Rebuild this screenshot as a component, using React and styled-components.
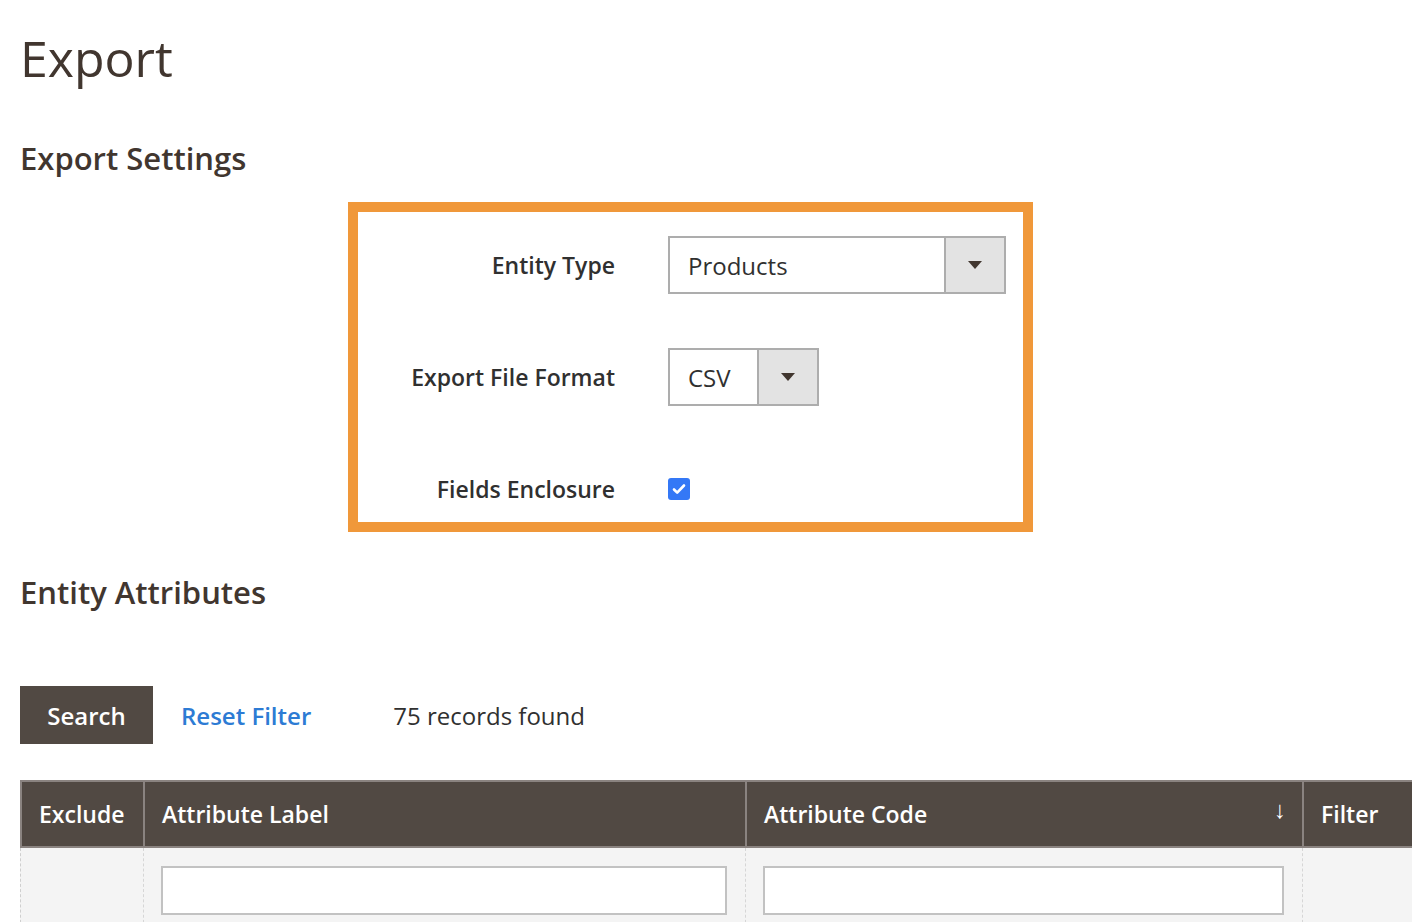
import React from 'react';
import styled, { createGlobalStyle } from 'styled-components';

const Global = createGlobalStyle`
  body { margin: 0; background: #fff; font-family: "Open Sans", "Liberation Sans", sans-serif; color: #303030; }
`;

const Page = styled.div`
  padding: 22px 0 0 20px;
  overflow: hidden;
  height: 922px;
  box-sizing: border-box;
`;

const Title = styled.h1`
  margin: 0;
  font-size: 50px;
  font-weight: 400;
  color: #41362f;
  line-height: 72px;
`;

const Section = styled.h2`
  margin: ${p => p.$mt} 0 0;
  font-size: 31px;
  font-weight: 600;
  color: #41362f;
  line-height: 44px;
`;

const Highlight = styled.div`
  margin: 22px 0 0 328px;
  width: 665px;
  border: 10px solid #f0983a;
  padding: 24px 0 4px;
  display: grid;
  grid-template-columns: 257px 1fr;
  column-gap: 53px;
  row-gap: 54px;
`;

const Label = styled.div`
  height: 58px;
  display: flex;
  align-items: center;
  justify-content: flex-end;
  font-size: 23px;
  font-weight: 600;
  color: #303030;
`;

const Control = styled.div`
  height: 58px;
  display: flex;
  align-items: center;
`;

const Select = styled.div`
  width: ${p => p.$w}px;
  height: 58px;
  box-sizing: border-box;
  border: 2px solid #adadad;
  display: flex;
  font-size: 24px;
  color: #303030;
`;

const SelectValue = styled.div`
  flex: 1;
  display: flex;
  align-items: center;
  padding-left: 18px;
`;

const Arrow = styled.div`
  width: 58px;
  background: #e3e3e3;
  border-left: 2px solid #adadad;
  display: flex;
  align-items: center;
  justify-content: center;
  &::after {
    content: '';
    border-left: 7px solid transparent;
    border-right: 7px solid transparent;
    border-top: 8px solid #41362f;
  }
`;

const Check = styled.div`
  width: 22px;
  height: 22px;
  border-radius: 3px;
  background: #3478f6;
  display: flex;
  align-items: center;
  justify-content: center;
`;

const Toolbar = styled.div`
  margin-top: 72px;
  display: flex;
  align-items: center;
`;

const SearchButton = styled.button`
  width: 133px;
  height: 58px;
  background: #514943;
  border: 1px solid #514943;
  color: #fff;
  font: 600 24px "Open Sans", sans-serif;
  cursor: pointer;
`;

const ResetLink = styled.a`
  margin-left: 28px;
  color: #2d7bd4;
  font-size: 24px;
  font-weight: 600;
`;

const Count = styled.span`
  margin-left: 82px;
  font-size: 24px;
  color: #303030;
`;

const Table = styled.div`
  margin-top: 36px;
  display: grid;
  grid-template-columns: 123px 602px 557px 120px;
  width: 1402px;
`;

const Th = styled.div`
  height: 68px;
  box-sizing: border-box;
  background: #514943;
  border-top: 2px solid #8a8380;
  border-bottom: 2px solid #8a8380;
  border-left: 2px solid ${p => (p.$first ? '#8a8380' : '#8a8380')};
  color: #fff;
  font-size: 23px;
  font-weight: 600;
  display: flex;
  align-items: center;
  padding-left: ${p => p.$pl || 17}px;
  position: relative;
`;

const SortMark = styled.span`
  position: absolute;
  right: 16px;
  top: 10px;
  font-size: 24px;
  font-weight: 400;
`;

const Td = styled.div`
  height: 80px;
  box-sizing: border-box;
  background: #f4f4f4;
  border-left: 1px dashed ${p => (p.$first ? '#cfcfcf' : '#d6d6d6')};
  padding: 18px 18px 0 17px;
`;

const FilterInput = styled.input`
  width: 100%;
  height: 49px;
  box-sizing: border-box;
  border: 2px solid #c2c2c2;
  background: #fff;
`;

export default function App() {
  return (
    <>
      <Global />
      <Page>
        <Title>Export</Title>
        <Section $mt="42px">Export Settings</Section>
        <Highlight>
          <Label>Entity Type</Label>
          <Control>
            <Select $w={338}><SelectValue>Products</SelectValue><Arrow /></Select>
          </Control>
          <Label>Export File Format</Label>
          <Control>
            <Select $w={151}><SelectValue>CSV</SelectValue><Arrow /></Select>
          </Control>
          <Label>Fields Enclosure</Label>
          <Control>
            <Check>
              <svg width="16" height="16" viewBox="0 0 16 16">
                <path d="M3 8.5l3.2 3.2L13 4.5" fill="none" stroke="#fff" strokeWidth="2.6" strokeLinecap="round" strokeLinejoin="round" />
              </svg>
            </Check>
          </Control>
        </Highlight>
        <Section $mt="38px">Entity Attributes</Section>
        <Toolbar>
          <SearchButton>Search</SearchButton>
          <ResetLink>Reset Filter</ResetLink>
          <Count>75 records found</Count>
        </Toolbar>
        <Table>
          <Th $first>Exclude</Th>
          <Th>Attribute Label</Th>
          <Th>Attribute Code<SortMark>↓</SortMark></Th>
          <Th>Filter</Th>
          <Td $first />
          <Td><FilterInput /></Td>
          <Td><FilterInput /></Td>
          <Td />
        </Table>
      </Page>
    </>
  );
}
